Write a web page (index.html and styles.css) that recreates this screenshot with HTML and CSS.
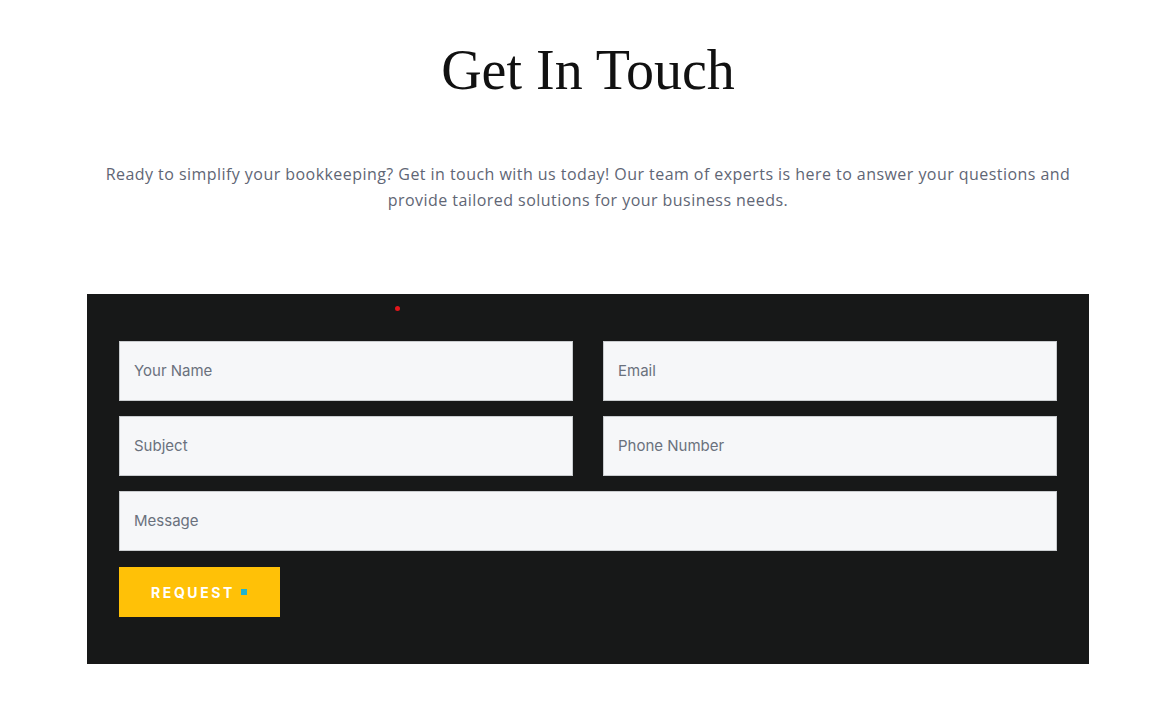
FILE: index.html
```html
<!DOCTYPE html>
<html lang="en">
<head>
<meta charset="utf-8">
<title>Get In Touch</title>
<link rel="stylesheet" href="styles.css">
</head>
<body>
<section class="contact">
  <h1 class="title">Get In Touch</h1>
  <p class="lead">Ready to simplify your bookkeeping? Get in touch with us today! Our team of experts is here to answer your questions and provide tailored solutions for your business needs.</p>
  <div class="panel">
    <span class="dot"></span>
    <form class="form">
      <div class="row">
        <input class="field" type="text" placeholder="Your Name">
        <input class="field" type="text" placeholder="Email">
      </div>
      <div class="row">
        <input class="field" type="text" placeholder="Subject">
        <input class="field" type="text" placeholder="Phone Number">
      </div>
      <input class="field" type="text" placeholder="Message">
      <button class="btn" type="button">REQUEST <span class="sq"></span></button>
    </form>
  </div>
</section>
</body>
</html>
```
FILE: styles.css
```css
* { box-sizing: border-box; }
html, body { margin: 0; padding: 0; background: #fff; }
body { font-family: "Open Sans", "Liberation Sans", sans-serif; }

.contact {
  display: flex;
  flex-direction: column;
  align-items: center;
  padding: 34px 78px 0 87px;
}

.title {
  margin: 0;
  font-family: "Liberation Serif", serif;
  font-weight: 400;
  font-size: 56px;
  line-height: 72px;
  color: #111;
}

.lead {
  margin: 55px 0 0;
  max-width: 1000px;
  text-align: center;
  font-family: "Open Sans", sans-serif;
  font-size: 16px;
  letter-spacing: 0.45px;
  line-height: 26px;
  color: #5f6675;
}

.panel {
  position: relative;
  margin-top: 81px;
  width: 1002px;
  background: #171818;
  padding: 47px 32px 47px 32px;
}

.dot {
  position: absolute;
  left: 308px;
  top: 12px;
  width: 5px;
  height: 5px;
  border-radius: 50%;
  background: #e3161b;
}

.form {
  display: flex;
  flex-direction: column;
  gap: 15px;
}

.row {
  display: grid;
  grid-template-columns: 1fr 1fr;
  gap: 30px;
}

.field {
  display: block;
  width: 100%;
  height: 60px;
  padding: 0 14px 2px;
  border: 1px solid #c9cccf;
  background: #f6f7f9;
  font-family: "Inter", "Roboto", sans-serif;
  font-size: 15px;
  color: #333;
  outline: none;
  border-radius: 0;
}
.field::placeholder { color: #6a717d; }

.btn {
  align-self: flex-start;
  margin-top: 1px;
  display: flex;
  align-items: center;
  gap: 6px;
  width: 161px;
  height: 50px;
  padding: 0 0 0 32px;
  border: 0;
  background: #ffc107;
  color: #fff;
  font-family: "Inter", "Roboto", sans-serif;
  font-weight: 700;
  font-size: 14px;
  letter-spacing: 2.6px;
  cursor: pointer;
}
.sq {
  display: inline-block;
  width: 6px;
  height: 6px;
  background: #1fb3d0;
}
```
